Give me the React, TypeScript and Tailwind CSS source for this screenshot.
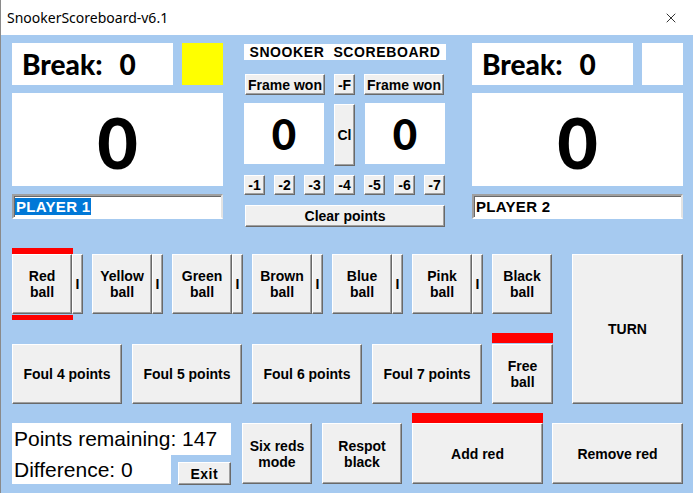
import { X } from "lucide-react";

const btn =
	"bg-[#f0f0f0] border border-t-white border-l-white border-r-[#696969] border-b-[#696969] shadow-[inset_-1px_-1px_0_#a0a0a0] font-bold text-[14px] leading-4 text-black flex items-center justify-center text-center";

const sunken =
	"bg-white border-2 border-t-[#a0a0a0] border-l-[#a0a0a0] border-b-white border-r-[#e3e3e3] shadow-[inset_1px_1px_0_#696969]";

const PlayerPanel = ({
	name,
	selected,
	indicator,
}: {
	name: string;
	selected?: boolean;
	indicator: string;
}) => (
	<div className="w-[211px] flex flex-col gap-[8px]">
		<div className="flex gap-[9px] h-[42px]">
			<div className="w-[161px] bg-white flex items-center pl-[10px] font-['Lato',sans-serif] font-black text-[28px] leading-none">
				<span>Break:</span>
				<span className="ml-[17px]">0</span>
			</div>
			<div className={`w-[41px] ${indicator}`} />
		</div>
		<div className="h-[93px] bg-white flex items-center justify-center font-['Lato',sans-serif] font-black text-[70px] leading-none pt-[4px]">
			0
		</div>
		<div className={`h-[25px] ${sunken} flex items-center pl-[1px]`}>
			<span
				className={`text-[15px] font-bold leading-[17px] px-[1px] tracking-[0.3px] ${
					selected ? "bg-[#0078d7] text-white" : "text-black"
				}`}
			>
				{name}
			</span>
		</div>
	</div>
);

const balls = [
	{ name: "Red", side: true, mark: true },
	{ name: "Yellow", side: true },
	{ name: "Green", side: true },
	{ name: "Brown", side: true },
	{ name: "Blue", side: true },
	{ name: "Pink", side: true },
	{ name: "Black", side: false },
];

const App = () => {
	return (
		<div className="w-[693px] h-[493px] bg-[#a6caf0] overflow-hidden flex flex-col border-l border-[#8a8a8a] font-['Liberation_Sans',Arial,sans-serif] text-black">
			{/* title bar */}
			<div className="h-[35px] bg-white flex items-center justify-between pl-[6px] pr-[14px] shrink-0">
				<span className="font-['Noto_Sans',sans-serif] text-[14px] text-black">
					SnookerScoreboard-v6.1
				</span>
				<X size={16} strokeWidth={1.2} className="text-black" />
			</div>

			<div className="pl-[11px] pt-[8px] flex flex-col">
				{/* top section */}
				<div className="flex items-start">
					<PlayerPanel name="PLAYER 1" selected indicator="bg-[#ffff00]" />

					<div className="w-[202px] ml-[21px] mt-[1px] flex flex-col">
						<div className="h-[16px] bg-white flex items-center justify-center font-bold text-[14px] tracking-[0.6px] whitespace-pre">
							SNOOKER  SCOREBOARD
						</div>
						<div className="flex gap-[9px] mt-[14px] pl-[1px] h-[21px]">
							<div className={`${btn} w-[80px]`}>Frame won</div>
							<div className={`${btn} w-[21px]`}>-F</div>
							<div className={`${btn} w-[80px]`}>Frame won</div>
						</div>
						<div className="flex items-start gap-[10px] mt-[8px]">
							<div className="w-[80px] h-[61px] bg-white flex items-center justify-center font-['Lato',sans-serif] font-black text-[42px] leading-none">
								0
							</div>
							<div className={`${btn} w-[21px] h-[62px] mt-[1px]`}>Cl</div>
							<div className="w-[80px] h-[61px] bg-white flex items-center justify-center font-['Lato',sans-serif] font-black text-[42px] leading-none">
								0
							</div>
						</div>
						<div className="flex gap-[9px] mt-[9px] h-[20px]">
							{["-1", "-2", "-3", "-4", "-5", "-6", "-7"].map((n) => (
								<div key={n} className={`${btn} w-[21px]`}>
									{n}
								</div>
							))}
						</div>
						<div className={`${btn} mt-[10px] ml-[1px] w-[200px] h-[22px]`}>
							Clear points
						</div>
					</div>

					<div className="ml-[26px]">
						<PlayerPanel name="PLAYER 2" indicator="bg-white" />
					</div>
				</div>

				{/* balls + fouls */}
				<div className="flex items-start mt-[27px]">
					<div className="w-[542px] flex flex-col gap-[30px]">
						<div className="flex gap-[9px] h-[60px]">
							{balls.map((b) => (
								<div key={b.name} className="relative flex">
									{b.mark && (
										<>
											<div className="absolute left-0 -top-[6px] w-[61px] h-[6px] bg-[#ff0000]" />
											<div className="absolute left-0 -bottom-[6px] w-[61px] h-[5px] bg-[#ff0000]" />
										</>
									)}
									<div className={`${btn} w-[60px] h-[60px]`}>
										{b.name}
										<br />
										ball
									</div>
									{b.side && (
										<div className={`${btn} w-[11px] h-[60px]`}>I</div>
									)}
								</div>
							))}
						</div>
						<div className="flex gap-[10px] h-[60px]">
							{[4, 5, 6, 7].map((n) => (
								<div key={n} className={`${btn} w-[110px]`}>
									Foul {n} points
								</div>
							))}
							<div className="relative">
								<div className="absolute left-0 -top-[11px] w-[61px] h-[10px] bg-[#ff0000]" />
								<div className={`${btn} w-[61px] h-[60px]`}>
									Free
									<br />
									ball
								</div>
							</div>
						</div>
					</div>
					<div className={`${btn} ml-[18px] w-[111px] h-[150px]`}>TURN</div>
				</div>

				{/* bottom row */}
				<div className="flex items-start mt-[19px]">
					<div className="w-[219px] flex flex-col">
						<div className="h-[32px] bg-white flex items-center pl-[2px] text-[21px]">
							Points remaining: 147
						</div>
						<div className="flex items-start">
							<div className="w-[160px] h-[29px] bg-white flex items-center pl-[2px] text-[21px]">
								Difference: 0
							</div>
							<div className={`${btn} ml-[7px] mt-[7px] w-[54px] h-[23px] tracking-[0.5px]`}>
								Exit
							</div>
						</div>
					</div>
					<div className={`${btn} ml-[11px] w-[70px] h-[61px]`}>
						Six reds
						<br />
						mode
					</div>
					<div className={`${btn} ml-[10px] w-[80px] h-[61px]`}>
						Respot
						<br />
						black
					</div>
					<div className="relative ml-[10px]">
						<div className="absolute left-0 -top-[10px] w-[131px] h-[10px] bg-[#ff0000]" />
						<div className={`${btn} w-[131px] h-[61px]`}>Add red</div>
					</div>
					<div className={`${btn} ml-[9px] w-[131px] h-[61px]`}>Remove red</div>
				</div>
			</div>
		</div>
	);
};

export default App;
